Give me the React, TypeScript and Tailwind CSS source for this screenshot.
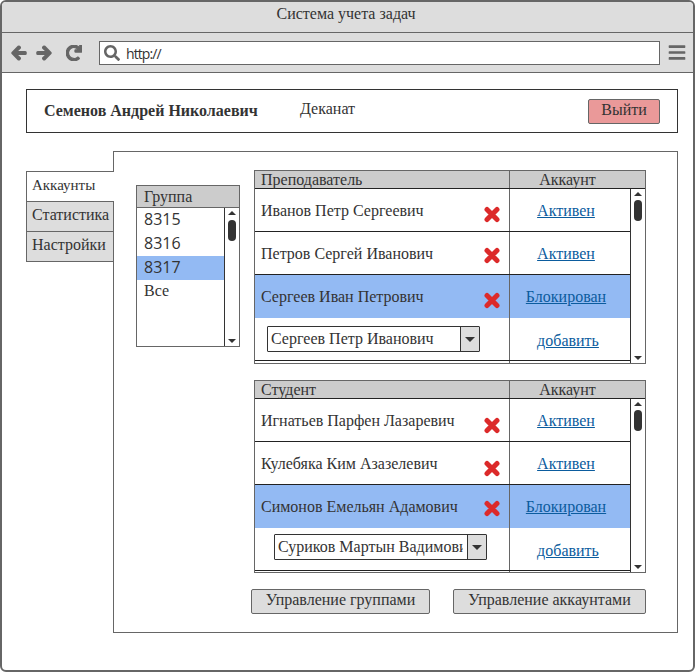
import React from 'react';
import { FaArrowLeft, FaArrowRight, FaBars, FaRedo, FaSearch } from 'react-icons/fa';

type Person = {
  name: string;
  status: string;
  selected?: boolean;
  iconClass: string;
};

const teachers: Person[] = [
  { name: 'Иванов Петр Сергеевич', status: 'Активен', iconClass: 'mt-[6px]' },
  { name: 'Петров Сергей Иванович', status: 'Активен', iconClass: 'mt-[2px]' },
  { name: 'Сергеев Иван Петрович', status: 'Блокирован', selected: true, iconClass: 'mt-[7px]' },
];

const students: Person[] = [
  { name: 'Игнатьев Парфен Лазаревич', status: 'Активен', iconClass: 'mt-[8px]' },
  { name: 'Кулебяка Ким Азазелевич', status: 'Активен', iconClass: 'mt-[8px]' },
  { name: 'Симонов Емельян Адамович', status: 'Блокирован', selected: true, iconClass: 'mt-[4px]' },
];

function CrossIcon({ className }: { className: string }) {
  return (
    <svg viewBox="0 0 16 16" className={`h-[17px] w-[16px] shrink-0 ${className}`}>
      <path d="M3 3 L13 13 M13 3 L3 13" stroke="#dc2a2a" strokeWidth="5" strokeLinecap="round" fill="none" />
    </svg>
  );
}

function Scrollbar({ thumbClass }: { thumbClass: string }) {
  return (
    <div className="flex w-[15px] shrink-0 flex-col items-center border-l border-[#333] bg-white">
      <div className="mt-[3px] h-0 w-0 border-x-[4px] border-b-[4px] border-x-transparent border-b-[#333]" />
      <div className={`w-[8px] rounded-[4px] bg-[#333] ${thumbClass}`} />
      <div className="mt-auto mb-[3px] h-0 w-0 border-x-[4px] border-t-[4px] border-x-transparent border-t-[#333]" />
    </div>
  );
}

function PersonRow({ person }: { person: Person }) {
  return (
    <div className={`flex h-[43px] ${person.selected ? 'bg-[#93baf3]' : 'border-b border-[#222] pt-[2px]'}`}>
      <div className="flex w-[254px] items-center justify-between pr-[9px] pl-[6px]">
        <span>{person.name}</span>
        <CrossIcon className={person.iconClass} />
      </div>
      <div className={`flex flex-1 items-center justify-center border-l border-[#666] pr-[8px] ${person.selected ? '' : '-mt-[2px] pt-[2px]'}`}>
        <a className="text-[#0b5c9e] underline">{person.status}</a>
      </div>
    </div>
  );
}

function PeopleTable({
  title,
  rows,
  pick,
  pickClass,
  heightClass,
}: {
  title: string;
  rows: Person[];
  pick: string;
  pickClass: string;
  heightClass: string;
}) {
  return (
    <div className={`flex w-[392px] flex-col border border-[#666] ${heightClass}`}>
      <div className="flex h-[18px] shrink-0 border-b border-[#222] bg-[#ccc] leading-[18px]">
        <div className="w-[254px] pl-[6px]">{title}</div>
        <div className="flex-1 border-l border-[#666] pr-[20px] text-center">Аккаунт</div>
      </div>
      <div className="flex min-h-0 flex-1">
        <div className="flex w-[375px] flex-col">
          {rows.map((person) => (
            <PersonRow key={person.name} person={person} />
          ))}
          <div className="flex h-[43px] border-b border-[#222]">
            <div className="w-[254px]">
              <div className={`flex h-[26px] w-[213px] rounded-[1px] border border-[#333] bg-white ${pickClass}`}>
                <div className="mr-[4px] min-w-0 flex-1 overflow-hidden pl-[3px] leading-[24px] whitespace-nowrap">{pick}</div>
                <div className="flex w-[19px] shrink-0 items-center justify-center border-l border-[#333] bg-[#ddd]">
                  <div className="h-0 w-0 border-x-[5px] border-t-[5px] border-x-transparent border-t-[#333]" />
                </div>
              </div>
            </div>
            <div className="flex flex-1 items-center justify-center border-l border-[#666] pt-[3px] pr-[4px]">
              <a className="text-[#0b5c9e] underline">добавить</a>
            </div>
          </div>
          <div className="flex-1">
            <div className="ml-[254px] h-full border-l border-[#666]" />
          </div>
        </div>
        <Scrollbar thumbClass="mt-[4px] h-[21px]" />
      </div>
    </div>
  );
}

export default function App() {
  return (
    <div className="h-[672px] w-[695px] overflow-hidden rounded-[6px] border-2 border-[#666] bg-white font-['Liberation_Serif',serif] text-[16px] text-[#333]">
      <div className="h-[31px] border-b border-[#666] bg-[#ddd] pr-[3px] text-center leading-[24px]">Система учета задач</div>

      <div className="flex h-[40px] items-center border-b border-[#666] bg-[#ddd] pl-[9px] text-[#666]">
        <FaArrowLeft className="h-[16px] w-[16px] [stroke-width:50]" />
        <FaArrowRight className="ml-[9px] h-[16px] w-[16px] [stroke-width:50]" />
        <FaRedo className="ml-[14px] h-[16px] w-[16px] [stroke-width:40]" />
        <div className="ml-[17px] flex h-[24px] w-[561px] items-center border border-[#666] bg-white pl-[4px]">
          <FaSearch className="h-[16px] w-[16px]" />
          <span className="mt-[1px] ml-[6px] font-['Open_Sans',sans-serif] text-[14px] tracking-[-0.9px] text-[#333]">http://</span>
        </div>
        <FaBars className="ml-[8px] h-[19px] w-[18px]" />
      </div>

      <div className="mt-[16px] ml-[24px] flex h-[44px] w-[652px] items-center border border-[#333] pr-[17px] pl-[17px]">
        <span className="-mt-[1px] w-[256px] font-bold">Семенов Андрей Николаевич</span>
        <span className="-mt-[4px]">Деканат</span>
        <button className="ml-auto h-[25px] w-[72px] rounded-[2px] border border-[#666] bg-[#ea9999] pb-[2px] leading-[20px]">Выйти</button>
      </div>

      <div className="mt-[18px] ml-[24px] flex">
        <div className="relative z-10 mt-[20px] -mr-px flex w-[88px] shrink-0 flex-col self-start">
          <div className="h-[31px] border border-r-0 border-[#666] bg-white pl-[5px] text-[15px] leading-[26px]">Аккаунты</div>
          <div className="-mt-px h-[31px] border border-[#666] bg-[#ddd] pl-[5px] leading-[26px]">Статистика</div>
          <div className="-mt-px h-[31px] border border-[#666] bg-[#ddd] pl-[5px] leading-[26px]">Настройки</div>
        </div>

        <div className="flex h-[482px] w-[565px] items-start border border-[#666]">
          <div className="mt-[33px] ml-[22px] flex h-[162px] w-[104px] shrink-0 flex-col border border-[#666]">
            <div className="h-[22px] shrink-0 border-b border-[#666] bg-[#ccc] pl-[7px] leading-[21px]">Группа</div>
            <div className="flex min-h-0 flex-1">
              <div className="flex-1 text-[16px]">
                <div className="h-[24px] pl-[7px] font-['Open_Sans',sans-serif] leading-[23px]">8315</div>
                <div className="h-[24px] pl-[7px] font-['Open_Sans',sans-serif] leading-[23px]">8316</div>
                <div className="h-[24px] bg-[#93baf3] pl-[7px] font-['Open_Sans',sans-serif] leading-[23px]">8317</div>
                <div className="h-[24px] pl-[7px] leading-[22px]">Все</div>
              </div>
              <Scrollbar thumbClass="mt-[5px] h-[21px]" />
            </div>
          </div>

          <div className="mt-[18px] ml-[14px] flex flex-col">
            <PeopleTable
              title="Преподаватель"
              rows={teachers}
              pick="Сергеев Петр Иванович"
              pickClass="mt-[8px] ml-[12px]"
              heightClass="h-[194px]"
            />
            <div className="mt-[16px]">
              <PeopleTable
                title="Студент"
                rows={students}
                pick="Суриков Мартын Вадимович"
                pickClass="mt-[6px] ml-[19px]"
                heightClass="h-[193px]"
              />
            </div>
            <div className="mt-[16px] -ml-[3px] flex justify-between">
              <button className="h-[25px] w-[179px] rounded-[2px] border border-[#666] bg-[#ddd] pb-[3px] leading-[20px]">Управление группами</button>
              <button className="h-[25px] w-[193px] rounded-[2px] border border-[#666] bg-[#ddd] pb-[3px] leading-[20px]">Управление аккаунтами</button>
            </div>
          </div>
        </div>
      </div>
    </div>
  );
}
